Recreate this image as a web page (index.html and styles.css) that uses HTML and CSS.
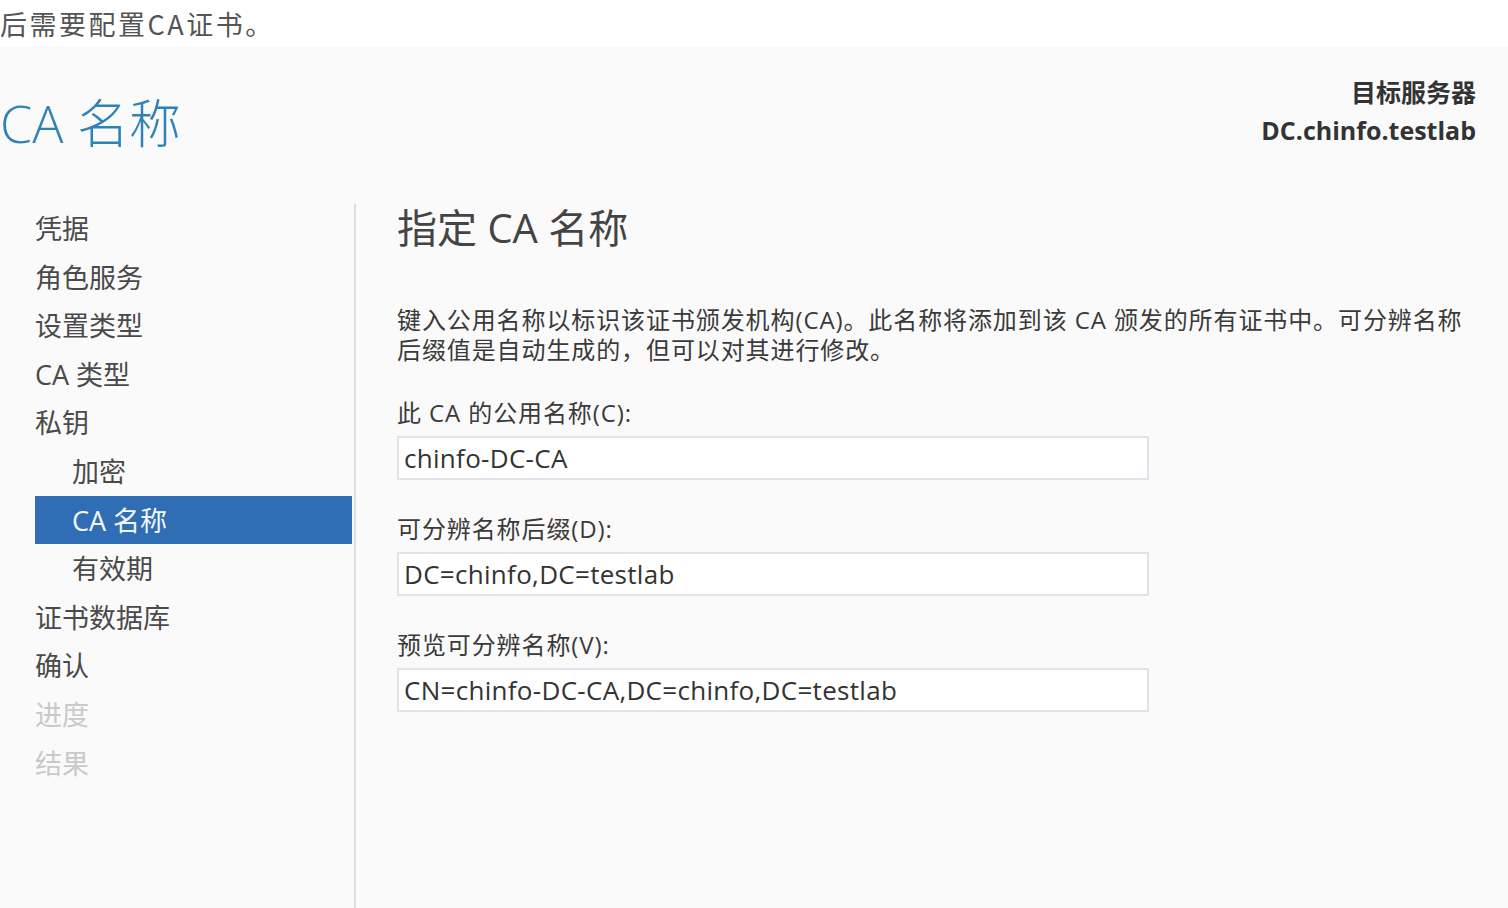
FILE: index.html
```html
<!DOCTYPE html>
<html lang="zh-CN">
<head>
<meta charset="utf-8">
<title>CA 名称</title>
<link rel="stylesheet" href="styles.css">
</head>
<body>
<div class="intro">后需要配置CA证书。</div>
<div class="wizard">
  <header class="wiz-header">
    <h1 class="wiz-title">CA 名称</h1>
    <div class="target">
      <div class="target-label">目标服务器</div>
      <div class="target-name">DC.chinfo.testlab</div>
    </div>
  </header>
  <div class="wiz-body">
    <nav class="steps">
      <div class="step">凭据</div>
      <div class="step">角色服务</div>
      <div class="step">设置类型</div>
      <div class="step">CA 类型</div>
      <div class="step">私钥</div>
      <div class="step sub">加密</div>
      <div class="step sub active">CA 名称</div>
      <div class="step sub">有效期</div>
      <div class="step">证书数据库</div>
      <div class="step">确认</div>
      <div class="step disabled">进度</div>
      <div class="step disabled">结果</div>
    </nav>
    <main class="content">
      <h2 class="content-title">指定 CA 名称</h2>
      <p class="desc">键入公用名称以标识该证书颁发机构(CA)。此名称将添加到该 CA 颁发的所有证书中。可分辨名称<br>后缀值是自动生成的，但可以对其进行修改。</p>
      <div class="field">
        <div class="field-label">此 CA 的公用名称(C):</div>
        <div class="field-input">chinfo-DC-CA</div>
      </div>
      <div class="field">
        <div class="field-label">可分辨名称后缀(D):</div>
        <div class="field-input">DC=chinfo,DC=testlab</div>
      </div>
      <div class="field">
        <div class="field-label">预览可分辨名称(V):</div>
        <div class="field-input">CN=chinfo-DC-CA,DC=chinfo,DC=testlab</div>
      </div>
    </main>
  </div>
</div>
</body>
</html>
```

FILE: styles.css
```css
html, body {
  margin: 0;
  padding: 0;
  background: #ffffff;
}
body {
  width: 1508px;
  height: 908px;
  overflow: hidden;
  font-family: "Open Sans", "Noto Sans CJK SC", sans-serif;
  color: #444;
}
.intro {
  height: 47px;
  line-height: 48px;
  font-size: 27px;
  letter-spacing: 2.5px;
  color: #555;
  font-family: "Noto Sans CJK SC", sans-serif;
  background: #fff;
  white-space: nowrap;
}
.wizard {
  background: #fafafa;
  height: 861px;
  display: flex;
  flex-direction: column;
}
.wiz-header {
  display: flex;
  justify-content: space-between;
  align-items: flex-start;
  height: 157px;
}
.wiz-title {
  margin: 0;
  padding-top: 44px;
  font-size: 52px;
  line-height: 64px;
  font-weight: 300;
  color: #2f82b6;
  font-family: "Open Sans", "Noto Sans CJK SC", sans-serif;
}
.target {
  padding-top: 27px;
  padding-right: 32px;
  text-align: right;
  font-weight: 700;
  color: #333;
}
.target-label {
  font-size: 25px;
  line-height: 36px;
}
.target-name {
  font-size: 25px;
  line-height: 40px;
}
.wiz-body {
  display: flex;
  flex: 1;
}
.steps {
  width: 317px;
  margin-left: 35px;
  padding-right: 2px;
  border-right: 2px solid #dedede;
  display: flex;
  flex-direction: column;
}
.step {
  height: 48.6px;
  line-height: 49px;
  font-size: 27px;
  color: #4a4a4a;
  white-space: nowrap;
}
.step.sub {
  padding-left: 37px;
}
.step.active {
  background: #2f6eb5;
  color: #f2f6fb;
}
.step.disabled {
  color: #c9c9c9;
}
.content {
  padding-left: 41px;
  flex: 1;
}
.content-title {
  margin: 0;
  font-size: 40px;
  line-height: 48px;
  font-weight: 400;
  color: #444;
}
.desc {
  margin: 53px 0 0;
  font-size: 24px;
  letter-spacing: 0.9px;
  line-height: 30px;
  color: #3a3a3a;
  white-space: nowrap;
}
.field {
  margin-top: 33px;
}
.field + .field {
  margin-top: 34px;
}
.field-label {
  font-size: 24px;
  letter-spacing: 0.9px;
  line-height: 30px;
  color: #3a3a3a;
}
.field-input {
  margin-top: 8px;
  height: 40px;
  border: 2px solid #e2e2ea;
  background: #fff;
  box-sizing: content-box;
  padding: 0 0 0 5px;
  width: 743px;
  font-size: 26px;
  letter-spacing: 0.3px;
  line-height: 40px;
  color: #333;
  white-space: nowrap;
}
```
